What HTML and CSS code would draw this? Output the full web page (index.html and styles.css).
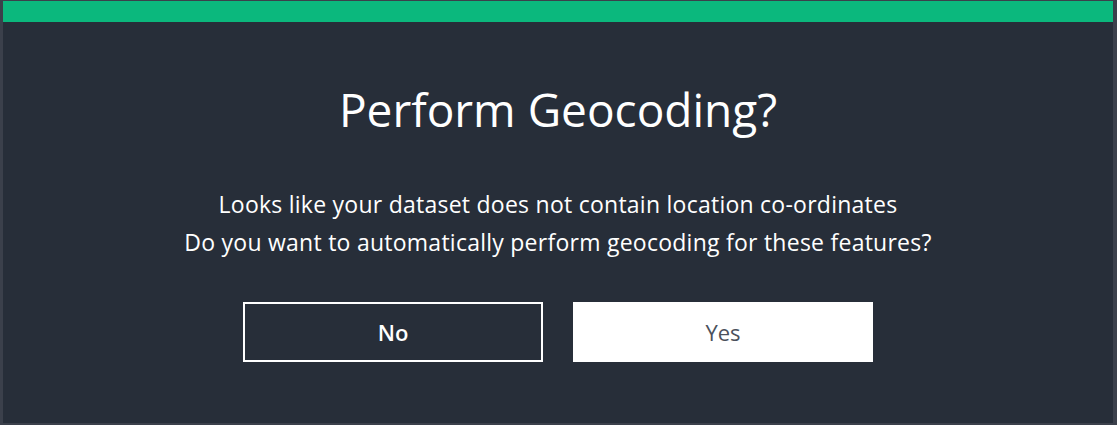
FILE: index.html
```
<!DOCTYPE html>
<html>
<head>
<meta charset="utf-8">
<link rel="stylesheet" href="styles.css">
</head>
<body>
<div class="frame">
  <div class="accent"></div>
  <div class="content">
    <h1 class="title">Perform Geocoding?</h1>
    <p class="message">Looks like your dataset does not contain location co-ordinates<br>Do you want to automatically perform geocoding for these features?</p>
    <div class="actions">
      <button class="btn btn-no">No</button>
      <button class="btn btn-yes">Yes</button>
    </div>
  </div>
</div>
</body>
</html>
```
FILE: styles.css
```
html, body {
  margin: 0;
  padding: 0;
  width: 1117px;
  height: 425px;
  overflow: hidden;
  background: #3a3f4a;
}
.frame {
  box-sizing: border-box;
  width: 1117px;
  height: 425px;
  border-style: solid;
  border-color: #3b404b;
  border-width: 1px 4px 2px 3px;
  background: #272e39;
  display: flex;
  flex-direction: column;
  font-family: "Open Sans", "Noto Sans", sans-serif;
  color: #ffffff;
}
.accent {
  height: 21px;
  background: #0bb87d;
  flex: none;
}
.content {
  display: flex;
  flex-direction: column;
  align-items: center;
  padding-top: 57px;
}
.title {
  margin: 0;
  font-weight: 400;
  font-size: 46px;
  line-height: 60px;
  letter-spacing: 0;
}
.message {
  margin: 46px 0 0 0;
  text-align: center;
  font-size: 23px;
  font-weight: 500;
  line-height: 38px;
  letter-spacing: 0.25px;
}
.actions {
  display: flex;
  gap: 30px;
  margin-top: 41px;
}
.btn {
  box-sizing: border-box;
  width: 300px;
  height: 60px;
  font-family: inherit;
  font-size: 22px;
  cursor: pointer;
}
.btn-no {
  background: transparent;
  border: 2px solid #ffffff;
  color: #ffffff;
  font-weight: 600;
}
.btn-yes {
  background: #ffffff;
  border: none;
  color: #4b515c;
  font-weight: 400;
}
```
